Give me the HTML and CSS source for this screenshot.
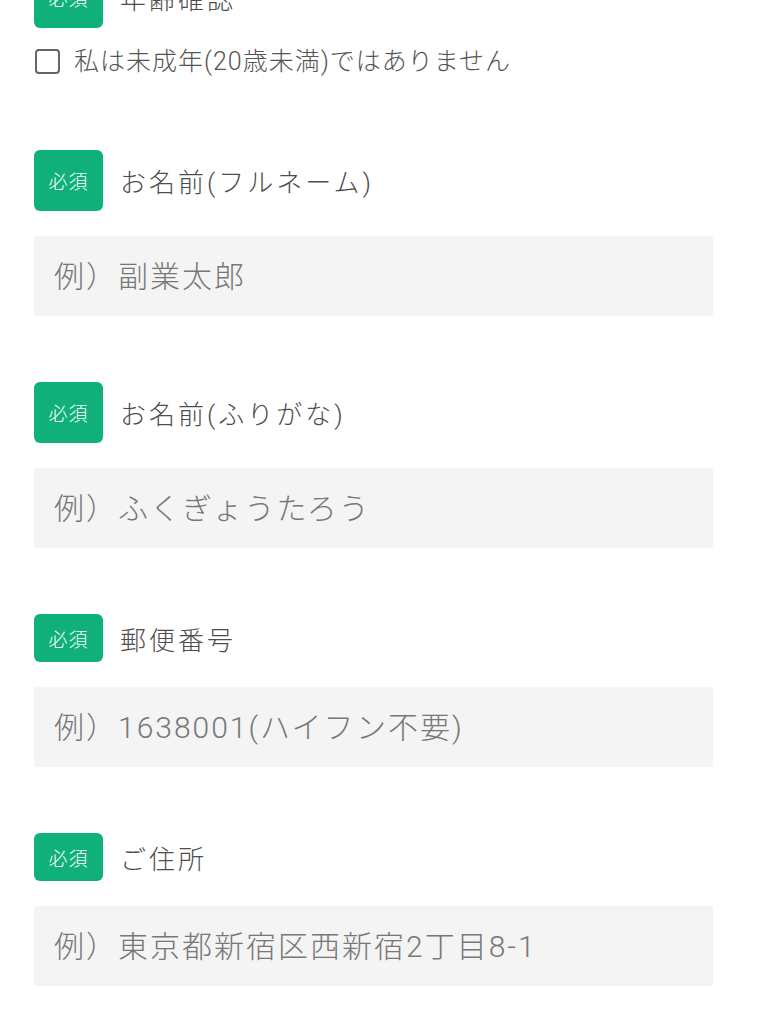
FILE: index.html
```html
<!DOCTYPE html>
<html lang="ja">
<head>
  <meta charset="UTF-8">
  <meta name="viewport" content="width=device-width, initial-scale=1.0">
  <title>応募フォーム</title>
  <link rel="stylesheet" href="styles.css">
</head>
<body>
  <form class="form">
    <div class="field field-age">
      <div class="field-head">
        <span class="badge badge-tall">必須</span>
        <label class="field-label">年齢確認</label>
      </div>
      <label class="check">
        <input type="checkbox">
        <span>私は未成年(20歳未満)ではありません</span>
      </label>
    </div>

    <div class="field">
      <div class="field-head">
        <span class="badge badge-tall">必須</span>
        <label class="field-label" for="name">お名前(フルネーム)</label>
      </div>
      <input class="text" type="text" id="name" placeholder="例）副業太郎">
    </div>

    <div class="field">
      <div class="field-head">
        <span class="badge badge-tall">必須</span>
        <label class="field-label" for="kana">お名前(ふりがな)</label>
      </div>
      <input class="text" type="text" id="kana" placeholder="例）ふくぎょうたろう">
    </div>

    <div class="field">
      <div class="field-head">
        <span class="badge">必須</span>
        <label class="field-label" for="zip">郵便番号</label>
      </div>
      <input class="text" type="text" id="zip" placeholder="例）1638001(ハイフン不要)">
    </div>

    <div class="field">
      <div class="field-head">
        <span class="badge">必須</span>
        <label class="field-label" for="address">ご住所</label>
      </div>
      <input class="text" type="text" id="address" placeholder="例）東京都新宿区西新宿2丁目8-1">
    </div>
  </form>
</body>
</html>
```

FILE: styles.css
```css
body {
  margin: 0;
  background-color: #fff;
  font-family: Roboto, "Noto Sans CJK JP", sans-serif;
  color: #555;
}
.form {
  margin-top: -33px;
  padding: 0 47px 0 34px;
}
.field {
  margin-bottom: 66px;
}
.field-age {
  margin-bottom: 76px;
}
.field-head {
  display: flex;
  align-items: center;
  gap: 17px;
}
.badge {
  display: flex;
  align-items: center;
  justify-content: center;
  width: 69px;
  height: 48px;
  border-radius: 6px;
  background-color: #10b07a;
  color: #fff;
  font-size: 19px;
  font-weight: 300;
  letter-spacing: 1px;
}
.badge-tall {
  height: 61px;
}
.field-label {
  font-size: 26px;
  font-weight: 300;
  letter-spacing: 3px;
  color: #4d4d4d;
}
.check {
  display: flex;
  align-items: center;
  gap: 14px;
  margin-top: 21px;
  font-size: 25px;
  font-weight: 300;
  line-height: 25px;
  letter-spacing: 1px;
  color: #555;
}
.check input {
  appearance: none;
  flex: none;
  width: 25px;
  height: 25px;
  margin: 0 0 0 1px;
  border: 2px solid #666;
  border-radius: 4px;
  background: #fff;
}
.text {
  display: block;
  box-sizing: border-box;
  width: 100%;
  height: 80px;
  margin-top: 25px;
  padding: 0 20px;
  border: none;
  border-radius: 2px;
  background-color: #f4f4f4;
  font-family: inherit;
  font-size: 30px;
  font-weight: 300;
  letter-spacing: 2px;
  color: #333;
}
.text::placeholder {
  color: #777;
}
```
